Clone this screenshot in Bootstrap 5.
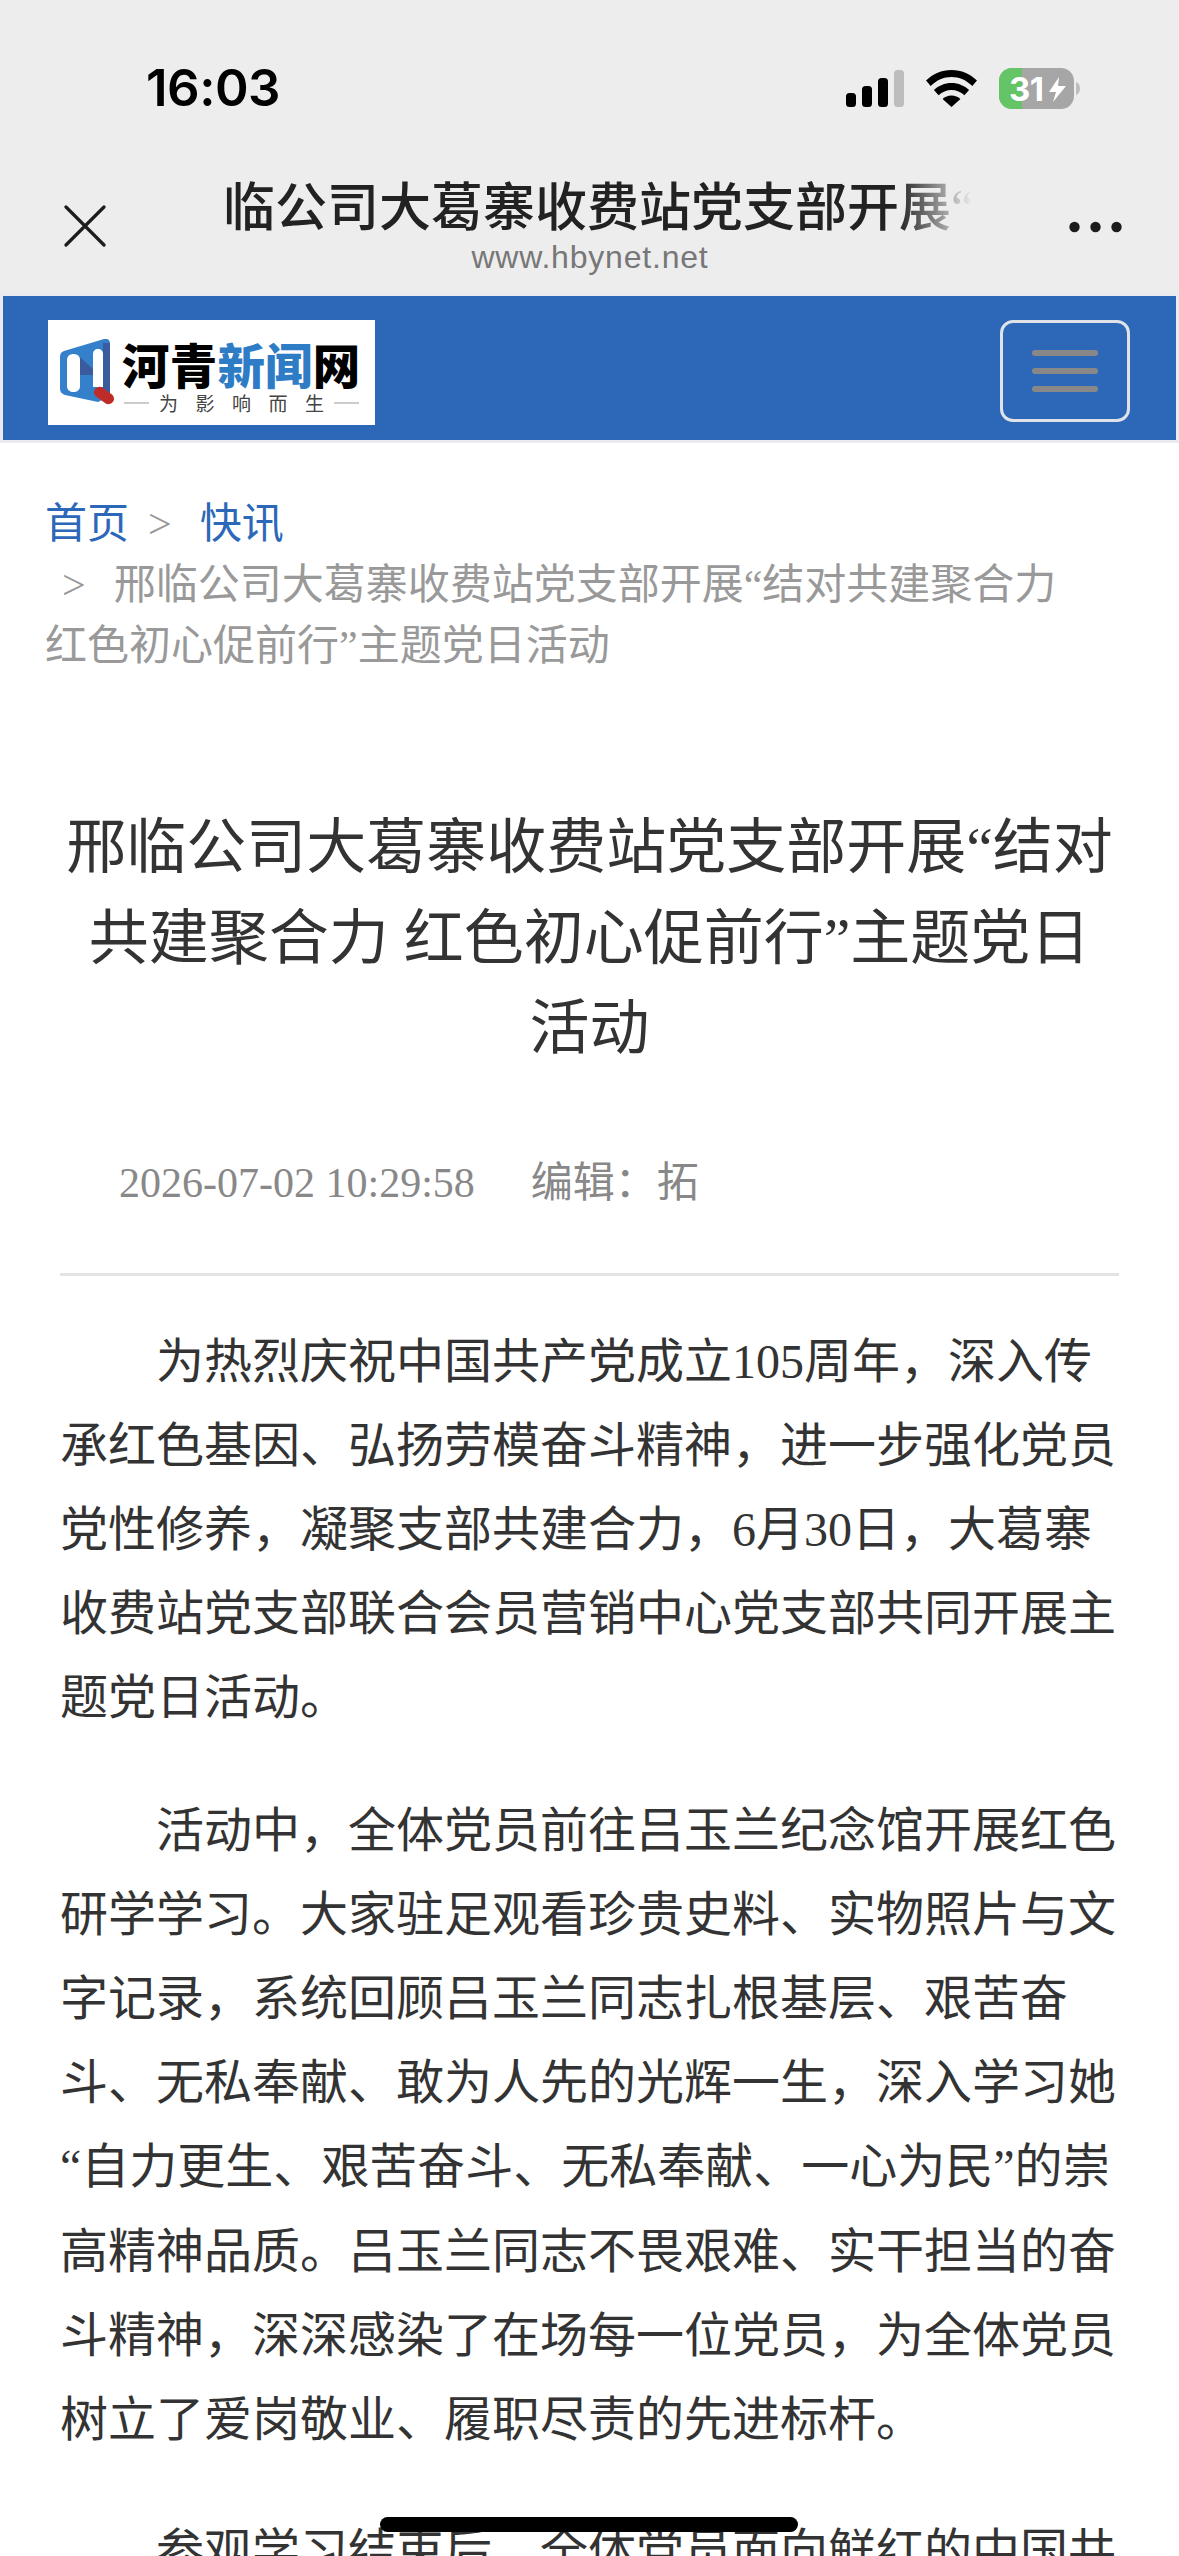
<!DOCTYPE html>
<html lang="zh-CN">
<head>
  <meta charset="UTF-8">
  <title>邢临公司大葛寨收费站党支部开展主题党日活动</title>
  <link href="https://cdn.jsdelivr.net/npm/bootstrap@5.3.3/dist/css/bootstrap.min.css" rel="stylesheet">
  <style>
    html, body { height: 100%; overflow: hidden; background: #fff; }
    body { font-family: "Liberation Serif", "Noto Sans CJK SC", serif; color: #333; }
    .phone-page { height: 2556px; overflow: hidden; position: relative; }

    .browser-top { background: #ededed; height: 293px; padding-top: 67px; font-family: "Noto Sans CJK SC", sans-serif; }
    .status-row { height: 42px; padding-left: 146px; padding-right: 98px; }
    .clock { font-family: Inter, sans-serif; font-weight: 600; font-size: 51px; line-height: 42px; color: #000; letter-spacing: -.5px; }
    .status-icons { gap: 22px; }
    .title-row { padding: 0 57px 0 64px; margin-top: 66px; }
    .title-row > svg { flex: none; }
    .close-icon { margin-top: 30px; }
    .more-icon { margin-top: 46px; margin-left: auto; }
    .title-mid { width: 750px; margin-left: 117px; text-align: center; }
    .title-clip { overflow: hidden; white-space: nowrap; height: 68px; line-height: 68px; font-family: "Liberation Serif", "Noto Sans CJK SC", sans-serif; font-size: 52px; font-weight: 500; color: #222; text-indent: -52px;
      -webkit-mask-image: linear-gradient(to right, #000 90%, transparent 100%); mask-image: linear-gradient(to right, #000 90%, transparent 100%); }
    .title-url { font-family: "Liberation Sans", sans-serif; font-size: 32px; line-height: 36px; color: #777; letter-spacing: .8px; margin-top: -4px; margin-right: 16px; }

    .blue-bar { background: #2d68b8; border: 3px solid #e9ebee; height: 150px; padding: 24px 46px 0 45px; align-items: flex-start; }
    .logo-box { width: 327px; height: 105px; background: #fff; padding: 19px 14px 0 12px; gap: 8px; }
    .logo-words { font-family: "Noto Sans CJK SC", sans-serif; font-weight: 900; font-size: 47.5px; line-height: 50px; color: #000; white-space: nowrap; letter-spacing: .2px; }
    .logo-words span { color: #2f7cc6; }
    .logo-slogan { font-family: "Noto Sans CJK SC", sans-serif; font-size: 19px; line-height: 24px; color: #444; margin-top: 2px; gap: 10px; }
    .logo-slogan i { display: block; height: 2px; width: 25px; background: #ccc; }
    .logo-slogan b { font-weight: 400; letter-spacing: 17.5px; margin-right: -17.5px; white-space: nowrap; }
    .menu-btn { width: 130px; height: 102px; border: 3px solid #dfe3e8; border-radius: 13px; padding: 0; gap: 12px; background: transparent; }
    .menu-btn i { display: block; width: 66px; height: 6px; border-radius: 3px; background: #888; }

    .crumbs { font-size: 42px; line-height: 61px; color: #999; margin: 51px 90px 0 45px; }
    .crumbs a { color: #2d68b8; text-decoration: none; }
    .crumbs .crumb-sep { margin: 0 28px 0 19px; }
    .crumbs .crumb-first { margin-left: 17px; }

    .story-title { font-family: inherit; font-weight: 400; font-size: 60px; line-height: 90.5px; color: #333; text-align: center; margin: 126px 60px 0; }
    .story-meta { font-size: 42px; line-height: 60px; color: #888; margin: 78px 60px 0 119px; gap: 56px; }
    .story-rule { height: 3px; background: #e3e3e3; margin: 60px 60px 0; }
    .story-body { margin: 44px 60px 0; font-size: 48px; line-height: 84.2px; color: #333; }
    .story-body p { margin: 0 0 48px; text-indent: 96px; }

    .home-bar { position: absolute; left: 380px; top: 2517px; width: 418px; height: 15px; border-radius: 8px; background: #000; }
  </style>
</head>
<body>
  <div class="phone-page">
    <div class="browser-top">
      <div class="status-row d-flex align-items-center justify-content-between">
        <div class="clock">16:03</div>
        <div class="status-icons d-flex align-items-center">
          <svg width="58" height="37" viewBox="0 0 58 37"><rect x="0" y="23" width="10" height="14" rx="3.5"/><rect x="16" y="16" width="10" height="21" rx="3.5"/><rect x="32" y="8" width="10" height="29" rx="3.5"/><rect x="48" y="0" width="10" height="37" rx="3.5" fill="#bdbdbd"/></svg>
          <svg width="51" height="37" viewBox="0 0 51 37"><path d="M25.5 0C15.6 0 7 3.9 0 10.5l4.7 5.4C10.6 10.300 17.700 7 25.500 7s14.900 3.300 20.800 8.900L51 10.500C44 3.900 35.400 0 25.500 0z"/><path d="M25.500 13c-6.900 0-13 2.700-17.600 7l4.700 5.300c3.500-3.200 8-5.200 12.900-5.200s9.400 2 12.900 5.200l4.700-5.300c-4.600-4.300-10.700-7-17.600-7z"/><path d="M25.500 25.500c-3.500 0-6.600 1.300-8.900 3.500l8.900 8 8.900-8c-2.300-2.200-5.400-3.500-8.900-3.500z"/></svg>
          <svg width="82" height="41" viewBox="0 0 82 41">
            <defs><clipPath id="batClip"><rect x="0" y="0" width="75" height="41" rx="13"/></clipPath></defs>
            <g clip-path="url(#batClip)"><rect width="75" height="41" fill="#a6a6a6"/><rect width="23" height="41" fill="#65c466"/></g>
            <path d="M77 14c2.500 1 4 3.500 4 6.500s-1.500 5.500-4 6.500z" fill="#bdbdbd"/>
            <text x="10" y="33" font-family="Inter, sans-serif" font-weight="700" font-size="33" letter-spacing="-.5" fill="#fff">31</text>
            <path d="M60 9 L50 24 h7 L54 34 L67 18 h-8z" fill="#fff"/>
          </svg>
        </div>
      </div>
      <div class="title-row d-flex align-items-start">
        <svg class="close-icon" width="42" height="42" viewBox="0 0 42 42" fill="none" stroke="#1c1c1c" stroke-width="3.200" stroke-linecap="round"><path d="M2 2 40 40M40 2 2 40"/></svg>
        <div class="title-mid">
          <div class="title-clip">邢临公司大葛寨收费站党支部开展“结对共建聚合力</div>
          <div class="title-url">www.hbynet.net</div>
        </div>
        <svg class="more-icon" width="53" height="12" viewBox="0 0 53 12" fill="#1c1c1c"><circle cx="5.500" cy="6" r="5.200"/><circle cx="26.500" cy="6" r="5.200"/><circle cx="47.500" cy="6" r="5.200"/></svg>
      </div>
    </div>

    <nav class="navbar blue-bar flex-nowrap">
      <a class="logo-box d-flex text-decoration-none" href="#">
        <svg class="flex-shrink-0" width="54" height="66" viewBox="0 0 54 66">
          <path d="M0 18c0-3 1-5 4-6L44 0c3-1 6 1 6 4v50l-6 6-6 3L5 56c-3-1-5-3-5-6z" fill="#3480cb"/>
          <path d="M43 4l7 0v50l-7 5z" fill="#3a5c9c"/>
          <path d="M20 18 33 30v6H20z" fill="#3a5c9c"/>
          <path d="M7 21c0-4 3-6 6.500-6s6.500 2 6.500 6v26c0 4-3 6-6.500 6S7 51 7 47z" fill="#fff"/>
          <path d="M33 15c0-3 2-5 5-5s5 2 5 5v33H33z" fill="#fff"/>
          <rect x="33" y="51" width="22" height="11" rx="5.500" fill="#bf2c28" transform="rotate(35 44 56.500)"/>
        </svg>
        <div class="flex-grow-1">
          <div class="logo-words">河青<span>新闻</span>网</div>
          <div class="logo-slogan d-flex align-items-center justify-content-center"><i></i><b>为影响而生</b><i></i></div>
        </div>
      </a>
      <button class="navbar-toggler menu-btn d-flex flex-column align-items-center justify-content-center" type="button" aria-label="菜单"><i></i><i></i><i></i></button>
    </nav>

    <div class="crumbs">
      <a href="#">首页</a><span class="crumb-sep">&gt;</span><a href="#">快讯</a><br>
      <span class="crumb-sep crumb-first">&gt;</span>邢临公司大葛寨收费站党支部开展“结对共建聚合力 红色初心促前行”主题党日活动
    </div>

    <h1 class="story-title">邢临公司大葛寨收费站党支部开展“结对共建聚合力 红色初心促前行”主题党日活动</h1>
    <div class="story-meta d-flex">
      <span>2026-07-02 10:29:58</span>
      <span>编辑：拓</span>
    </div>
    <div class="story-rule"></div>

    <div class="story-body">
      <p>为热烈庆祝中国共产党成立105周年，深入传承红色基因、弘扬劳模奋斗精神，进一步强化党员党性修养，凝聚支部共建合力，6月30日，大葛寨收费站党支部联合会员营销中心党支部共同开展主题党日活动。</p>
      <p>活动中，全体党员前往吕玉兰纪念馆开展红色研学学习。大家驻足观看珍贵史料、实物照片与文字记录，系统回顾吕玉兰同志扎根基层、艰苦奋斗、无私奉献、敢为人先的光辉一生，深入学习她“自力更生、艰苦奋斗、无私奉献、一心为民”的崇高精神品质。吕玉兰同志不畏艰难、实干担当的奋斗精神，深深感染了在场每一位党员，为全体党员树立了爱岗敬业、履职尽责的先进标杆。</p>
      <p>参观学习结束后，全体党员面向鲜红的中国共产党党旗重温入党誓词。</p>
    </div>

    <div class="home-bar"></div>
  </div>
  <script src="https://cdn.jsdelivr.net/npm/bootstrap@5.3.3/dist/js/bootstrap.bundle.min.js"></script>
</body>
</html>
